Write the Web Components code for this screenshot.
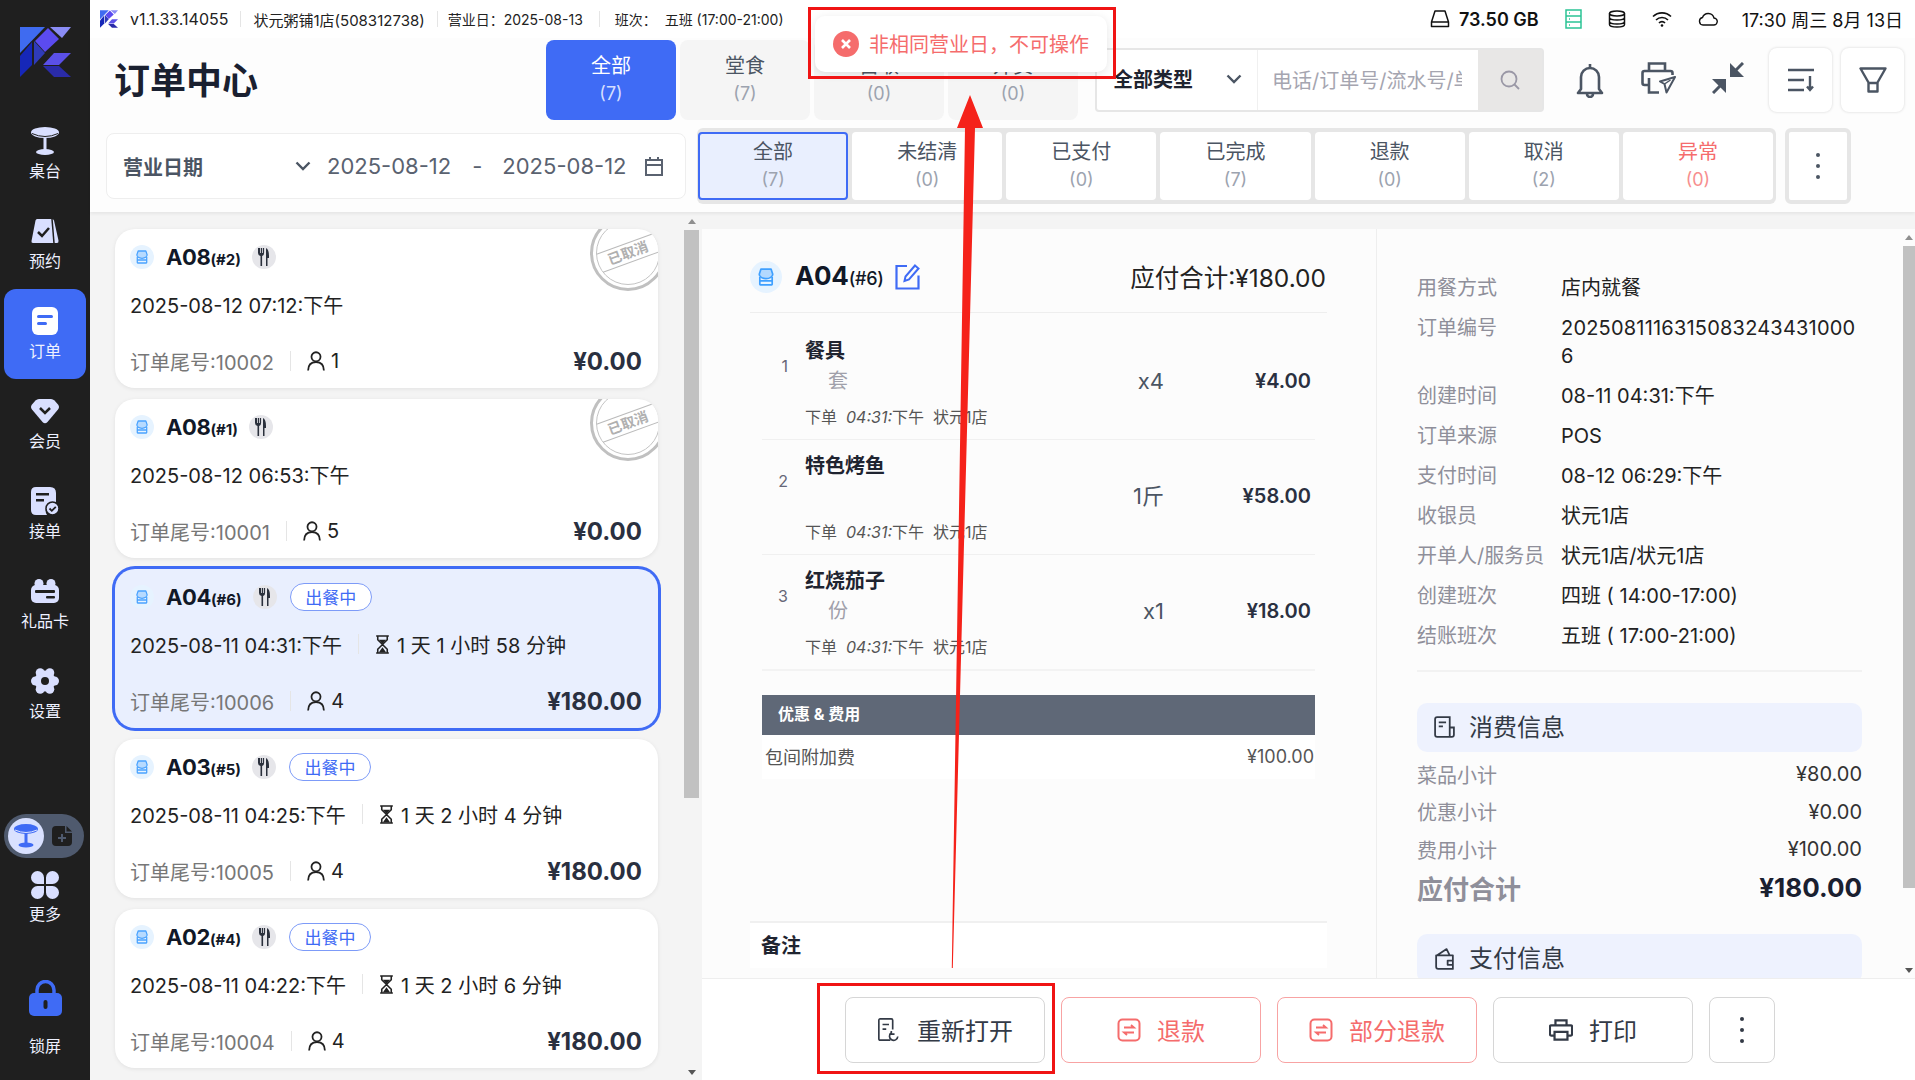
<!DOCTYPE html>
<html lang="zh">
<head>
<meta charset="utf-8">
<title>订单中心</title>
<style>
    html, body { margin: 0; height: 100%; }
    body { font-family: Inter, "Noto Sans CJK SC", sans-serif; color: #222; background: #f4f4f4; overflow: hidden; }
</style>
</head>
<body>
<pos-app></pos-app>
<script>
const LOGO = `
    <polygon fill="#3f6bf0" points="0,0 25,0 0,26"/>
    <polygon fill="#5b4bf0" points="28,1 39,12 25,25 15,14"/>
    <polygon fill="#8a8cf5" points="30,0 51,0 42,11"/>
    <polygon fill="#1627b8" points="0,29 12,15 12,38 0,50"/>
    <polygon fill="#2f3bb8" points="14,14 25,26 14,38"/>
    <polygon fill="#5b50e8" points="23,38 34,26 51,26 39,38"/>
    <polygon fill="#2a2ba8" points="23,39 39,39 51,50 34,50"/>`;

// Icons are keyed by name, each with its own viewBox
const ICONS = {
    logo: ['0 0 51 50', LOGO],
    table: ['0 0 28 28', `<ellipse cx="14" cy="5.5" rx="14" ry="5.5" fill="currentColor"/><path d="M1 6.5q13 6 26 0" stroke="#1f1f1f" fill="none"/><rect x="12.5" y="11" width="3" height="13" fill="currentColor"/><ellipse cx="14" cy="25" rx="9" ry="3" fill="currentColor"/>`],
    reserve: ['0 0 28 24', `<path d="M6 0h15q1.500 0 2 1.500l4.500 20q.3 2.500-1.500 2.500h-24q-2 0-1.500-2l4-20.500q.5-1.500 1.500-1.500z" fill="currentColor"/><path d="M21 0l2 24" stroke="#1f1f1f" stroke-width="1.500"/><path d="M7 13l4 4 7-8" stroke="#1f1f1f" stroke-width="2.500" fill="none"/>`],
    order: ['0 0 26 28', `<rect width="26" height="28" rx="6" fill="#fff"/><rect x="5" y="8" width="16" height="3" rx="1.500" fill="#3f6bf5"/><rect x="5" y="15" width="10" height="3" rx="1.500" fill="#3f6bf5"/>`],
    member: ['0 0 28 26', `<path d="M8 1h12q2 0 3.500 1.500l3.500 4q2 2.500 0 5l-10.500 12.500q-2.500 2.500-5 0l-10.500-12.500q-2-2.500 0-5l3.500-4q1.500-1.500 3.500-1.500z" fill="currentColor"/><path d="M9 10l5 5 5-5" stroke="#1f1f1f" stroke-width="2.500" fill="none"/>`],
    accept: ['0 0 28 28', `<path d="M5 0h14q6 0 6 6v10a8 8 0 0 0-9 12h-11q-5 0-5-5v-18q0-5 5-5z" fill="currentColor"/><rect x="5" y="6" width="13" height="2.500" fill="#1f1f1f"/><rect x="5" y="12" width="8" height="2.500" fill="#1f1f1f"/><circle cx="21.500" cy="21.500" r="6.500" fill="currentColor" stroke="#1f1f1f" stroke-width="1.500"/><path d="M18.500 21.500l2.300 2.300 4-4" stroke="#1f1f1f" stroke-width="1.800" fill="none"/>`],
    gift: ['0 0 28 24', `<circle cx="8" cy="4.500" r="4.500" fill="currentColor"/><circle cx="20" cy="4.500" r="4.500" fill="currentColor"/><rect y="6" width="28" height="18" rx="5" fill="currentColor"/><rect x="4" y="11" width="20" height="3" rx="1" fill="#1f1f1f"/><rect x="15" y="17" width="9" height="2.500" rx="1" fill="#1f1f1f"/>`],
    gear: ['0 0 28 28', `<g fill="currentColor"><circle cx="14" cy="14" r="10.500"/><circle cx="23.500" cy="14" r="4.500"/><circle cx="18.800" cy="5.700" r="4.500"/><circle cx="9.200" cy="5.700" r="4.500"/><circle cx="4.500" cy="14" r="4.500"/><circle cx="9.200" cy="22.300" r="4.500"/><circle cx="18.800" cy="22.300" r="4.500"/></g><circle cx="14" cy="14" r="4" fill="#1f1f1f"/>`],
    more: ['0 0 28 28', `<path d="M13 13h-6.500a6.500 6.500 0 1 1 6.500-6.500zM15 13h6.500a6.500 6.500 0 1 0-6.500-6.500zM13 15h-6.500a6.500 6.500 0 1 0 6.500 6.500zM15 15h6.500a6.500 6.500 0 1 1-6.500 6.500z" fill="currentColor"/>`],
    lock: ['0 0 33 36', `<path d="M8 16v-6a8.500 8.500 0 0 1 17 0v6" fill="none" stroke="#3f6bf5" stroke-width="3.500"/><rect y="13" width="33" height="23" rx="5" fill="#3f6bf5"/><rect x="14.500" y="20" width="4" height="9" rx="2" fill="#1f1f1f"/>`],
    blueTable: ['0 0 24 24', `<ellipse cx="12" cy="5" rx="12" ry="5" fill="#3f6bf5"/><path d="M1 6q11 5 22 0" stroke="#d9e1ff" fill="none"/><rect x="10.500" y="9" width="3" height="10" fill="#3f6bf5"/><ellipse cx="12" cy="21" rx="7.500" ry="2.500" fill="#3f6bf5"/>`],
    newDoc: ['0 0 20 20', `<path d="M4 0h9v7h7v9q0 4-4 4h-12q-4 0-4-4v-12q0-4 4-4z" fill="#1f1f1f"/><path d="M14.500 0l5.500 5.500h-5.500z" fill="#1f1f1f"/><path d="M6 12h8M10 8v8" stroke="#4f5a6e" stroke-width="2"/>`],
    disk: ['0 0 20 18', `<path d="M5 1h10l3.500 11v4.500h-17v-4.500zM1.500 12h17" fill="none" stroke="currentColor" stroke-width="1.500" stroke-linejoin="round"/>`],
    server: ['0 0 17 20', `<path d="M1 1h15v18h-15zM1 7h15M1 13h15" fill="none" stroke="#2bc495" stroke-width="1.500"/><path d="M4 4h1M4 10h1M4 16h1" stroke="#2bc495" stroke-width="1.500"/>`],
    db: ['0 0 18 18', `<ellipse cx="9" cy="3.500" rx="7.500" ry="2.500" fill="none" stroke="currentColor" stroke-width="1.500"/><path d="M1.500 3.500v11c0 1.400 3.400 2.500 7.500 2.500s7.500-1.100 7.500-2.500v-11M1.500 7.500c0 1.400 3.400 2.500 7.500 2.500s7.500-1.100 7.500-2.500M1.500 11.500c0 1.400 3.400 2.500 7.500 2.500s7.500-1.100 7.500-2.500" fill="none" stroke="currentColor" stroke-width="1.500"/>`],
    wifi: ['0 0 20 16', `<path d="M1 5.500a13 13 0 0 1 18 0M4 9a8.500 8.500 0 0 1 12 0M7 12a4 4 0 0 1 6 0" fill="none" stroke="currentColor" stroke-width="1.600"/><circle cx="10" cy="14.500" r="1.300" fill="currentColor"/>`],
    cloud: ['0 0 20 14', `<path d="M5 13h10.500a3.500 3.500 0 0 0 .5-7 6 6 0 0 0-11.500-.5 3.800 3.800 0 0 0 .5 7.500z" fill="none" stroke="currentColor" stroke-width="1.400"/>`],
    bell: ['0 0 28 36', `<path d="M2 31h24l-3-4v-12a9 9 0 0 0-18 0v12zM14 6v-4M11 32a3 3 0 0 0 6 0" fill="none" stroke="#4b5563" stroke-width="2.600" stroke-linejoin="round"/>`],
    printer: ['0 0 35 32', `<path d="M8 9v-7.500h16v7.500M7 23h-3.500q-2 0-2-2v-10q0-2 2-2h26q2 0 2 2v2M8 16v14.500h10" fill="none" stroke="#4b5563" stroke-width="2.600"/><path d="M34 15l-15 4.500 4.500 2.500 2 8.500z" fill="none" stroke="#4b5563" stroke-width="2" stroke-linejoin="round"/><path d="M23.500 22l6-4" stroke="#4b5563" stroke-width="1.500"/>`],
    compress: ['0 0 32 32', `<polygon points="18,1 18,15 32,15" fill="#4b5563"/><path d="M31 1l-7 7" stroke="#4b5563" stroke-width="3"/><polygon points="14,31 14,17 0,17" fill="#4b5563"/><path d="M1 31l7-7" stroke="#4b5563" stroke-width="3"/>`],
    sort: ['0 0 26 24', `<path d="M0 2h26M0 12h16M0 22h16M22 8v14M19 18.500l3 3.500 3-3.500" fill="none" stroke="#4b5563" stroke-width="2.400"/>`],
    funnel: ['0 0 28 26', `<path d="M1.500 1.500h25l-8 14v9h-9v-9zM9.500 16h9" fill="none" stroke="#4b5563" stroke-width="2.400" stroke-linejoin="round"/>`],
    chevron: ['0 0 16 10', `<path d="M1.500 1.500l6.500 6.500 6.500-6.500" fill="none" stroke="currentColor" stroke-width="2.400"/>`],
    calendar: ['0 0 18 20', `<path d="M1 4h16v15h-16zM1 9h16M5 1v4M13 1v4" fill="none" stroke="currentColor" stroke-width="2"/>`],
    search: ['0 0 20 20', `<circle cx="9" cy="9" r="7.500" fill="none" stroke="currentColor" stroke-width="1.800"/><path d="M14.500 14.500l4.500 4.500" stroke="currentColor" stroke-width="1.800"/>`],
    store: ['0 0 14 16', `<path d="M2.500 1h9l1.500 4.500a3 2 0 0 1-12 0z" fill="currentColor" fill-opacity=".3" stroke="currentColor" stroke-width="1.500" stroke-linejoin="round"/><path d="M1.500 8v6.500q0 .5.5.5h10q.5 0 .5-.5v-6.500M1.500 11.500h11" fill="none" stroke="currentColor" stroke-width="1.500"/>`],
    fork: ['0 0 12 18', `<path d="M0.500 0v5q0 2.500 2.500 3v10h1.600v-10q2-.5 2-3v-5h-1.200v5h-.8v-5h-1.100v5h-.8v-5zM8.500 18v-18q3 1.500 3 8v2h-1.500v8z" fill="currentColor"/>`],
    hourglass: ['0 0 14 18', `<path d="M1 1h12M1 17h12M2.500 1v3.500l4.500 4.500 4.500-4.500v-3.500M2.500 17v-3.500l4.500-4.500 4.500 4.500v3.500" fill="none" stroke="#222" stroke-width="1.500"/><path d="M3.500 4.500h7l-3.500 4zM3.500 16.500l3.500-5 3.500 5z" fill="#222"/>`],
    person: ['0 0 17 19', `<circle cx="8.500" cy="5.500" r="4.300" fill="none" stroke="currentColor" stroke-width="1.700"/><path d="M1 18.500q0-8 7.500-8t7.500 8" fill="none" stroke="currentColor" stroke-width="1.700"/>`],
    edit: ['0 0 25 26', `<path d="M12 2h-10.500v22.500h22v-13" fill="none" stroke="#3f6bf5" stroke-width="2.200"/><path d="M20 1.500l3.500 3-9.500 11-4.500 1.500 1-4.500z" fill="none" stroke="#3f6bf5" stroke-width="2"/>`],
    receipt: ['0 0 20 22', `<path d="M3 1h12v19h-12q-2 0-2-2v-15q0-2 2-2zM15 11h4v7q0 2-2 2h-2M4.500 6h7M4.500 10h4" fill="none" stroke="currentColor" stroke-width="1.700"/>`],
    wallet: ['0 0 20 22', `<path d="M2 8h16v13h-14q-2 0-2-2zM3 8l9-6 3 6M13 13h5v4h-5z" fill="none" stroke="currentColor" stroke-width="1.700" stroke-linejoin="round"/>`],
    reopen: ['0 0 25 26', `<path d="M14 24h-11q-1.500 0-1.500-1.500v-20q0-1.500 1.500-1.500h12q1.500 0 1.500 1.500v10M5.500 7h7M5.500 12h4" fill="none" stroke="currentColor" stroke-width="1.800"/><path d="M15 16a4.500 4.500 0 1 0 7 4M15 14v3.500h3.500" fill="none" stroke="currentColor" stroke-width="1.800"/>`],
    refund: ['0 0 24 24', `<rect x="1.500" y="1.500" width="21" height="21" rx="4" fill="none" stroke="currentColor" stroke-width="2"/><path d="M7 9.500h10l-3-2.500M17 14.500h-10l3 2.500" fill="none" stroke="currentColor" stroke-width="1.800"/>`],
    print: ['0 0 26 24', `<path d="M7 7v-5.500h12v5.500M6 18h-3.500q-1.500 0-1.500-1.500v-8q0-1.500 1.500-1.500h21q1.500 0 1.500 1.500v8q0 1.500-1.500 1.500h-3.500M6 14h14v8.500h-14z" fill="none" stroke="currentColor" stroke-width="2.400"/>`],
    close: ['0 0 26 26', `<circle cx="13" cy="13" r="13" fill="#f56c6c"/><path d="M9 9l8 8M17 9l-8 8" stroke="#fff" stroke-width="2.600"/>`],
};

function icon(name, w, h) {
    const [box, body] = ICONS[name];
    return `<svg viewBox="${box}" width="${w}" height="${h}" aria-hidden="true" style="display:block;flex:none">${body}</svg>`;
}

// Base class: every element renders its html into an open shadow root
class UiElement extends HTMLElement {
    connectedCallback() {
        if (this.shadowRoot) return;
        const template = document.createElement('template');
        template.innerHTML = this.render();
        this.attachShadow({ mode: 'open' });
        this.shadowRoot.appendChild(template.content.cloneNode(true));
    }

    attr(name, fallback = '') {
        return this.getAttribute(name) ?? fallback;
    }
}

class NavItem extends UiElement {
    render() {
        const [w, h] = this.attr('size', '28,28').split(',');
        return `
            <style>
                :host { display: flex; flex-direction: column; align-items: center; width: 82px; height: 90px; margin-left: 4px;
                    padding-top: 18px; box-sizing: border-box; border-radius: 12px; color: #d9dfff; }
                :host([active]) { background: #3f6bf5; }
                :host([bare]) { height: auto; padding-top: 0; }
                .box { height: 28px; display: flex; align-items: center; justify-content: center; }
                :host([tall]) .box { height: 36px; }
                .label { margin-top: 8px; font-size: 16px; line-height: 16px; color: #eef1ff; white-space: nowrap; }
                :host([bare]) .label { margin-top: 7px; }
                :host([tall]) .label { margin-top: 22px; }
            </style>
            <div class="box">${icon(this.attr('icon'), w, h)}</div>
            <div class="label"><slot></slot></div>
        `;
    }
}

class SideBar extends UiElement {
    render() {
        return `
            <style>
                :host { display: flex; flex-direction: column; width: 90px; height: 1080px; background: #1f1f1f; flex: none; }
                .logo { height: 109px; padding: 27px 0 0 20px; box-sizing: border-box; }
                .toggle { display: flex; align-items: center; width: 80px; height: 44px; margin: 75px 0 13px 4px; background: #4f5a6e;
                    border-radius: 22px; box-sizing: border-box; padding-left: 4px; }
                .knob { width: 36px; height: 36px; border-radius: 50%; background: #d9e1ff; display: flex; align-items: center; justify-content: center; }
                .doc { margin-left: 8px; }
                .lock { margin-top: 58px; }
            </style>
            <div class="logo">${icon('logo', 51, 50)}</div>
            <nav-item icon="table">桌台</nav-item>
            <nav-item icon="reserve" size="28,24">预约</nav-item>
            <nav-item icon="order" size="26,28" active>订单</nav-item>
            <nav-item icon="member" size="28,26">会员</nav-item>
            <nav-item icon="accept">接单</nav-item>
            <nav-item icon="gift" size="28,24">礼品卡</nav-item>
            <nav-item icon="gear">设置</nav-item>
            <div class="toggle">
                <div class="knob">${icon('blueTable', 24, 24)}</div>
                <div class="doc">${icon('newDoc', 20, 20)}</div>
            </div>
            <nav-item icon="more" bare>更多</nav-item>
            <div class="lock"><nav-item icon="lock" size="33,36" bare tall>锁屏</nav-item></div>
        `;
    }
}

class TopBar extends UiElement {
    render() {
        return `
            <style>
                :host { display: flex; align-items: center; height: 38px; background: #fff; font-size: 14px; color: #222; flex: none; white-space: nowrap; }
                .logo { margin: 0 12px 0 10px; }
                .sep { width: 1px; height: 16px; background: #e5e5e5; margin: 0 12px; }
                .ver { font-size: 16px; }
                .shop { font-size: 15px; }
                .right { margin-left: auto; display: flex; align-items: center; color: #111; }
                .gb { font-size: 18px; font-weight: 600; margin: 0 26px 0 9px; }
                .ico { margin-right: 26px; }
                .time { font-size: 18px; margin: 0 12px 0 -2px; }
            </style>
            <div class="logo">${icon('logo', 18, 18)}</div>
            <span class="ver">v1.1.33.14055</span><i class="sep"></i>
            <span class="shop">状元粥铺1店(508312738)</span><i class="sep" style="margin:0 10px 0 12px"></i>
            <span>营业日：2025-08-13</span><i class="sep" style="margin:0 15px 0 16px"></i>
            <span>班次：&nbsp;&nbsp;五班 (17:00-21:00)</span>
            <div class="right">
                ${icon('disk', 20, 18)}
                <span class="gb">73.50 GB</span>
                <span class="ico">${icon('server', 17, 20)}</span>
                <span class="ico">${icon('db', 18, 18)}</span>
                <span class="ico">${icon('wifi', 20, 16)}</span>
                <span class="ico">${icon('cloud', 20, 14)}</span>
                <span class="time">17:30 周三 8月 13日</span>
            </div>
        `;
    }
}

class TabButton extends UiElement {
    render() {
        return `
            <style>
                :host { display: flex; flex-direction: column; align-items: center; justify-content: center; box-sizing: border-box;
                    width: var(--tab-w, auto); height: var(--tab-h, auto); background: var(--tab-bg, #fff); border-radius: var(--tab-r, 4px);
                    color: #4b5563; font-size: 20px; line-height: 28px; }
                .n { font-size: 18px; color: #9ca3af; }
                :host([tone=solid]) { background: #3f6bf5; color: #fff; }
                :host([tone=solid]) .n { color: #d5deff; }
                :host([tone=soft]) { background: #e9effe; border: 2px solid #3f6bf5; }
                :host([tone=red]) { color: #f56c6c; }
                :host([tone=red]) .n { color: #f78f8f; }
            </style>
            <div><slot></slot></div>
            <div class="n">(${this.attr('count')})</div>
        `;
    }
}

class SearchBox extends UiElement {
    render() {
        return `
            <style>
                :host { display: flex; width: 449px; height: 64px; margin-left: 17px; box-sizing: border-box; background: #fff; border: 2px solid #e6e6e6; border-radius: 4px; flex: none; }
                .type { display: flex; align-items: center; width: 161px; padding: 0 0 3px 16px; box-sizing: border-box; font-size: 20px; font-weight: 700; color: #1f2430; border-right: 1px solid #f0f0f0; }
                .type svg { margin-left: 33px !important; color: #4b5563; }
                .input { flex: 1; display: flex; align-items: center; padding: 0 0 2px 14px; width: 0; font-size: 20px; color: #a5a5b0; overflow: hidden; white-space: nowrap; }
                .input span { display: block; width: 190px; overflow: hidden; }
                .go { width: 64px; background: #e8e7e6; display: flex; align-items: center; justify-content: center; color: #9a98a6; }
            </style>
            <div class="type">全部类型${icon('chevron', 16, 10)}</div>
            <div class="input"><span>电话/订单号/流水号/单据号</span></div>
            <div class="go">${icon('search', 20, 20)}</div>
        `;
    }
}

class OrderHeader extends UiElement {
    render() {
        return `
            <style>
                :host { display: block; background: #fdfdfd; height: 174px; box-shadow: 0 2px 3px rgba(0,0,0,.06); position: relative; flex: none; }
                .row1 { display: flex; align-items: center; height: 80px; padding-top: 2px; margin-bottom: 8px; }
                h1 { margin: 0 0 4px 24px; width: 432px; font-size: 36px; font-weight: 700; color: #1a2030; white-space: nowrap; }
                .tabs { display: flex; gap: 4px; --tab-w: 130px; --tab-h: 80px; --tab-bg: #f5f5f5; --tab-r: 8px; }
                .cell { width: 69px; display: flex; justify-content: center; flex: none; }
                .cells { display: flex; margin-left: 11px; }
                .card { width: 63px; height: 64px; box-sizing: border-box; background: #fff; border-radius: 8px; box-shadow: 0 0 3px rgba(0,0,0,.16);
                    display: flex; align-items: center; justify-content: center; flex: none; }
                .row2 { display: flex; align-items: center; }
                .date { display: flex; align-items: center; width: 580px; height: 66px; margin-left: 16px; box-sizing: border-box; background: #fff; border: 1px solid #eee; border-radius: 8px;
                    font-size: 22px; color: #5a6270; white-space: nowrap; }
                .date b { font-size: 20px; color: #4b5563; margin-left: 16px; width: 173px; }
                .date .chev { width: 32px; color: #4b5563; flex: none; margin-left: -1px; }
                .dash { margin: 0 20px 0 21px; }
                .date .cal { margin-left: 18px; color: #5a6270; }
                .status { display: grid; grid-template-columns: repeat(7, 1fr); gap: 4px; width: 1079px; height: 76px; margin-left: 11px; padding: 4px 3px 4px 1px; box-sizing: border-box; background: #e6e6e6; border-radius: 6px; }
                .more { display: flex; align-items: center; justify-content: center; width: 66px; height: 76px; margin-left: 9px; box-sizing: border-box; border: 4px solid #e6e6e6; border-radius: 6px; background: #fff; }
                .dots { display: flex; flex-direction: column; gap: 7px; }
                .dots i { width: 4px; height: 4px; background: #4b5563; border-radius: 50%; }
            </style>
            <div class="row1">
                <h1>订单中心</h1>
                <div class="tabs">
                    <tab-button tone="solid" count="7">全部</tab-button>
                    <tab-button count="7">堂食</tab-button>
                    <tab-button count="0">自取</tab-button>
                    <tab-button count="0">外卖</tab-button>
                </div>
                <search-box></search-box>
                <div class="cells">
                    <div class="cell">${icon('bell', 28, 36)}</div>
                    <div class="cell">${icon('printer', 35, 32)}</div>
                    <div class="cell">${icon('compress', 32, 32)}</div>
                </div>
                <div class="card" style="margin-left:7px">${icon('sort', 26, 24)}</div>
                <div class="card" style="margin-left:9px">${icon('funnel', 28, 26)}</div>
            </div>
            <div class="row2">
                <div class="date">
                    <b>营业日期</b>
                    <span class="chev">${icon('chevron', 16, 10)}</span>
                    <span>2025-08-12</span><span class="dash">-</span><span>2025-08-12</span>
                    <span class="cal">${icon('calendar', 18, 20)}</span>
                </div>
                <div class="status">
                    <tab-button tone="soft" count="7">全部</tab-button>
                    <tab-button count="0">未结清</tab-button>
                    <tab-button count="0">已支付</tab-button>
                    <tab-button count="7">已完成</tab-button>
                    <tab-button count="0">退款</tab-button>
                    <tab-button count="2">取消</tab-button>
                    <tab-button tone="red" count="0">异常</tab-button>
                </div>
                <div class="more"><div class="dots"><i></i><i></i><i></i></div></div>
            </div>
        `;
    }
}

class OrderCard extends UiElement {
    render() {
        const wait = this.attr('wait');
        const cooking = wait !== '';
        return `
            <style>
                :host { display: block; width: 543px; height: 159px; flex: none; border-radius: 20px; background: #fff; box-shadow: 0 1px 4px rgba(0,0,0,.08); }
                :host([selected]) { background: #e9effe; box-shadow: 0 0 0 3px #3f6bf5; }
                .in { position: relative; height: 100%; box-sizing: border-box; padding: 16px 16px 0 15px; overflow: hidden; border-radius: 20px; }
                .head { display: flex; align-items: center; height: 24px; }
                .store { width: 24px; height: 24px; border-radius: 50%; background: #e6f3ff; color: #4aa3ff; display: flex; align-items: center; justify-content: center; }
                .name { margin-left: 12px; font-size: 22px; font-weight: 700; color: #111827; white-space: nowrap; letter-spacing: -.4px; }
                .name small { font-size: 15px; font-weight: 700; letter-spacing: 0; }
                .fork { width: 24px; height: 24px; margin-left: 11px; border-radius: 50%; background: #e6e6ea; color: #2a303c; display: flex; align-items: center; justify-content: center; }
                .pill { margin: 0 0 1px 13px; width: 82px; height: 28px; box-sizing: border-box; border: 1.500px solid #7d9bf8; border-radius: 14px; color: #3f6bf5; font-size: 17px; display: flex; align-items: center; justify-content: center; background: #fff; }
                .time { display: flex; align-items: center; margin-top: 23px; height: 24px; font-size: 20px; color: #222; white-space: nowrap; }
                .time i, .foot i { width: 1px; height: 20px; background: #e5e5e5; margin: 0 16px; }
                .foot { display: flex; align-items: center; margin-top: 33px; height: 24px; font-size: 20px; color: #777; white-space: nowrap; }
                .foot .p { color: #222; display: flex; align-items: center; gap: 6px; }
                .foot .p svg { color: #222; }
                .total { margin-left: auto; font-size: 24px; font-weight: 700; color: #2a3040; }
                .stamp { position: absolute; left: 475px; top: -14px; width: 76px; height: 76px; box-sizing: border-box; border-radius: 50%; border: 3px solid #c0c0c0; }
                .stamp::before { content: ""; position: absolute; inset: 3px; border-radius: 50%; border: 1px solid #c4c4c4; }
                .stamp span { position: absolute; left: 5px; top: 25px; width: 60px; height: 18px; text-align: center; font-size: 14px; line-height: 18px; color: #b0b0b0; font-weight: 700; transform: rotate(-20deg); border-top: 1px solid #bbb; border-bottom: 1px solid #bbb; white-space: nowrap; }
            </style>
            <div class="in">
                <div class="head">
                    <div class="store">${icon('store', 12, 14)}</div>
                    <div class="name">${this.attr('name')}<small>(${this.attr('seq')})</small></div>
                    <div class="fork">${icon('fork', 13, 18)}</div>
                    ${cooking ? '<div class="pill">出餐中</div>' : ''}
                </div>
                <div class="time"><span>${this.attr('time')}</span>${cooking ? `<i></i>${icon('hourglass', 15, 19)}<span style="margin-left:7px">${wait}</span>` : ''}</div>
                <div class="foot">
                    <span>订单尾号:${this.attr('tail')}</span><i></i>
                    <span class="p">${icon('person', 18, 20)}${this.attr('people')}</span>
                    <span class="total">${this.attr('total')}</span>
                </div>
                ${cooking ? '' : '<div class="stamp"><span>已取消</span></div>'}
            </div>
        `;
    }
}

class ScrollRail extends UiElement {
    render() {
        return `
            <style>
                :host { display: flex; flex-direction: column; align-items: center; flex: none; width: var(--rail-w, 15px); height: 100%; background: var(--rail-bg, transparent); }
                .up { height: var(--rail-top, 18px); display: flex; align-items: center; justify-content: center; flex: none; }
                .up::before { content: ""; border: 4px solid transparent; border-top: 0; border-bottom: 5px solid #8f8f8f; }
                .thumb { width: 100%; height: var(--thumb, 568px); background: #c1c1c1; flex: none; }
                .down { margin-top: auto; height: 16px; display: flex; align-items: center; justify-content: center; }
                .down::before { content: ""; border: 4px solid transparent; border-bottom: 0; border-top: 5px solid #555; }
            </style>
            <div class="up"></div>
            <div class="thumb"></div>
            <div class="down"></div>
        `;
    }
}

class OrderList extends UiElement {
    render() {
        return `
            <style>
                :host { display: flex; width: 612px; height: 868px; flex: none; background: #f4f4f4; overflow: hidden; }
                .cards { display: flex; flex-direction: column; gap: 11px; padding: 17px 0 0 25px; width: 568px; box-sizing: border-box; flex: none; }
                scroll-rail { margin-left: 26px; }
            </style>
            <div class="cards"><slot></slot></div>
            <scroll-rail></scroll-rail>
        `;
    }
}

class OrderLine extends UiElement {
    render() {
        const unit = this.attr('unit');
        return `
            <style>
                :host { display: grid; grid-template-columns: 43px 1fr 100px 151px; grid-template-rows: 26px 26px 26px; row-gap: 4px;
                    height: 115px; box-sizing: border-box; padding: 13px 0 0; border-bottom: 1px solid #f0f0f0; }
                :host([last]) { border-bottom: 2px solid #f3f3f3; height: 116px; }
                .idx { grid-row: 1 / 3; align-self: center; text-align: right; padding-right: 17px; font-size: 16px; color: #667; }
                .name { font-size: 20px; line-height: 26px; font-weight: 700; color: #1f2430; }
                .unit { grid-column: 2; grid-row: 2; padding-left: 23px; font-size: 20px; line-height: 26px; color: #a0a0aa; }
                .qty { grid-column: 3; grid-row: 2; text-align: right; font-size: 22px; line-height: 26px; color: #4b5563; }
                .price { grid-column: 4; grid-row: 2; text-align: right; padding-right: 4px; font-size: 20px; line-height: 26px; font-weight: 600; color: #2a3040; }
                .meta { grid-column: 2 / 5; grid-row: 3; margin-top: 6px; font-size: 16px; line-height: 26px; color: #555; white-space: pre; }
                em { font-style: italic; }
            </style>
            <div class="idx">${this.attr('idx')}</div>
            <div class="name">${this.attr('name')}</div>
            ${unit ? `<div class="unit">${unit}</div>` : ''}
            <div class="qty">${this.attr('qty')}</div>
            <div class="price">${this.attr('price')}</div>
            <div class="meta">下单  <em>04:31:</em>下午  状元1店</div>
        `;
    }
}

class OrderDetail extends UiElement {
    render() {
        return `
            <style>
                :host { display: flex; flex-direction: column; width: 675px; height: 749px; box-sizing: border-box; padding: 32px 49px 10px 48px; background: #fcfcfc; border-right: 1px solid #eee; flex: none; }
                .head { display: flex; align-items: center; height: 32px; padding-bottom: 19px; border-bottom: 1px solid #eee; flex: none; }
                .store { width: 32px; height: 32px; border-radius: 50%; background: #e6f3ff; color: #3fa0ff; display: flex; align-items: center; justify-content: center; }
                .name { margin: 0 0 4px 13px; font-size: 26px; font-weight: 700; color: #111827; letter-spacing: -.3px; white-space: nowrap; }
                .name small { font-size: 18px; font-weight: 500; }
                .edit { margin: 0 0 1px 11px; }
                .sum { margin: 0 1px 2px auto; font-size: 24.500px; color: #222; white-space: nowrap; }
                .lines { margin: 0 12px; padding-top: 12px; }
                .fee { margin: 24px 12px 0; background: #fff; }
                .fee-title { height: 38px; line-height: 38px; padding: 0 0 2px 16px; background: #5f6877; color: #fff; font-size: 16px; font-weight: 700; }
                .fee-row { display: flex; justify-content: space-between; height: 42px; padding: 0 1px 2px 3px; align-items: center; font-size: 18px; color: #555; }
                .note { margin-top: auto; height: 47px; display: flex; align-items: center; padding: 0 0 2px 11px; background: #fff; border-top: 2px solid #f0f0f0; box-sizing: border-box; font-size: 20px; font-weight: 700; color: #1f2430; }
            </style>
            <div class="head">
                <div class="store">${icon('store', 16, 18)}</div>
                <div class="name">A04<small>(#6)</small></div>
                <div class="edit">${icon('edit', 25, 26)}</div>
                <div class="sum">应付合计:¥180.00</div>
            </div>
            <div class="lines"><slot></slot></div>
            <div class="fee">
                <div class="fee-title">优惠 &amp; 费用</div>
                <div class="fee-row"><span>包间附加费</span><span>¥100.00</span></div>
            </div>
            <div class="note">备注</div>
        `;
    }
}

class InfoRow extends UiElement {
    render() {
        return `
            <style>
                :host { display: grid; grid-template-columns: 144px 301px; font-size: 20px; line-height: 28px; margin-bottom: 12px; }
                .k { color: #8f8f9a; white-space: nowrap; }
                .v { color: #222; word-break: break-all; }
            </style>
            <div class="k">${this.attr('k')}</div>
            <div class="v"><slot></slot></div>
        `;
    }
}

class SumRow extends UiElement {
    render() {
        return `
            <style>
                :host { display: flex; justify-content: space-between; align-items: center; height: 28px; margin-top: 9.500px; font-size: 20px; color: #8f8f9a; }
                .v { color: #333; }
                :host([big]) { height: 36px; margin-top: 6px; font-size: 26px; font-weight: 700; }
                :host([big]) .v { color: #1a2030; }
            </style>
            <span>${this.attr('k')}</span>
            <span class="v">${this.attr('v')}</span>
        `;
    }
}

class SectionHead extends UiElement {
    render() {
        return `
            <style>
                :host { display: flex; align-items: center; gap: 14px; height: 49px; padding-left: 17px; background: #eef2fe; border-radius: 10px; font-size: 24px; color: #333a46; flex: none; }
                span { padding-bottom: 4px; }
            </style>
            ${icon(this.attr('icon'), 21, 23)}
            <span><slot></slot></span>
        `;
    }
}

class OrderInfo extends UiElement {
    render() {
        return `
            <style>
                :host { display: flex; flex: 1; height: 749px; background: #fcfcfc; overflow: hidden; }
                .body { width: 526px; box-sizing: border-box; padding: 44.500px 41px 0 40px; flex: none; }
                hr { border: 0; border-top: 2px solid #f2f2f2; margin: 20.500px 0 31px; }
                section-head + sum-row { margin-top: 8px; }
                .pay { margin-top: 29px; }
                .serial { letter-spacing: .2px; }
                scroll-rail { --rail-w: 12px; --rail-top: 17px; --thumb: 642px; margin-top: 0; }
            </style>
            <div class="body">
                <info-row k="用餐方式">店内就餐</info-row>
                <info-row k="订单编号"><span class="serial">20250811163150832434310006</span></info-row>
                <info-row k="创建时间">08-11 04:31:下午</info-row>
                <info-row k="订单来源">POS</info-row>
                <info-row k="支付时间">08-12 06:29:下午</info-row>
                <info-row k="收银员">状元1店</info-row>
                <info-row k="开单人/服务员">状元1店/状元1店</info-row>
                <info-row k="创建班次">四班 ( 14:00-17:00)</info-row>
                <info-row k="结账班次" style="margin-bottom:0">五班 ( 17:00-21:00)</info-row>
                <hr>
                <section-head icon="receipt">消费信息</section-head>
                <sum-row k="菜品小计" v="¥80.00"></sum-row>
                <sum-row k="优惠小计" v="¥0.00"></sum-row>
                <sum-row k="费用小计" v="¥100.00"></sum-row>
                <sum-row k="应付合计" v="¥180.00" big></sum-row>
                <section-head class="pay" icon="wallet">支付信息</section-head>
            </div>
            <scroll-rail></scroll-rail>
        `;
    }
}

class ActionButton extends UiElement {
    render() {
        const ic = this.attr('icon');
        return `
            <style>
                :host { display: flex; align-items: center; justify-content: center; gap: 16px; width: 200px; height: 66px; box-sizing: border-box; padding-bottom: 1px; border: 1.500px solid #d6d6d6; border-radius: 8px; background: #fff; font-size: 24px; color: #333a46; flex: none; }
                :host([tone=danger]) { border-color: #f8a3a3; color: #f56c6c; }
                :host([narrow]) { width: 66px; }
                .dots { display: flex; flex-direction: column; gap: 7px; }
                .dots i { width: 4px; height: 4px; background: #333a46; border-radius: 50%; }
            </style>
            ${ic ? icon(ic, 24, 24) : '<div class="dots"><i></i><i></i><i></i></div>'}
            <slot></slot>
        `;
    }
}

class ActionBar extends UiElement {
    render() {
        return `
            <style>
                :host { display: flex; gap: 16px; height: 102px; box-sizing: border-box; padding: 18px 0 0 143px; background: #fff; border-top: 1px solid #eee; flex: none; }
            </style>
            <action-button icon="reopen">重新打开</action-button>
            <action-button icon="refund" tone="danger">退款</action-button>
            <action-button icon="refund" tone="danger">部分退款</action-button>
            <action-button icon="print">打印</action-button>
            <action-button narrow></action-button>
        `;
    }
}

// Toast plus the red review marks drawn over the screenshot
class ReviewLayer extends UiElement {
    render() {
        return `
            <style>
                :host { position: absolute; inset: 0; pointer-events: none; display: block; }
                .toast { position: absolute; left: 815px; top: 16px; width: 292px; height: 56px; box-sizing: border-box; padding-left: 18px; background: #fff; border-radius: 10px; box-shadow: 0 2px 10px rgba(0,0,0,.1);
                    display: flex; align-items: center; gap: 10px; font-size: 20px; color: #f56c6c; white-space: nowrap; }
                .toast span { padding-bottom: 2px; }
                .box { position: absolute; box-sizing: border-box; border: 3px solid #f01414; }
                svg.arrow { position: absolute; left: 0; top: 0; }
            </style>
            <svg class="arrow" width="1915" height="1080" aria-hidden="true">
                <polygon fill="#f5221a" points="970,95 983,128 975,128 952.800,968 951.800,968 965,128 957,128"/>
            </svg>
            <div class="toast">${icon('close', 26, 26)}<span>非相同营业日，不可操作</span></div>
            <div class="box" style="left:808px;top:7px;width:308px;height:72px"></div>
            <div class="box" style="left:817px;top:983px;width:238px;height:91px"></div>
        `;
    }
}

class PosApp extends UiElement {
    render() {
        return `
            <style>
                :host { display: flex; position: relative; width: 1915px; height: 1080px; overflow: hidden; background: #f4f4f4; }
                .main { display: flex; flex-direction: column; flex: 1; min-width: 0; }
                .work { display: flex; flex: 1; min-height: 0; }
                .side { display: flex; flex-direction: column; flex: 1; min-width: 0; }
                .split { display: flex; margin-top: 17px; height: 749px; }
            </style>
            <side-bar></side-bar>
            <div class="main">
                <top-bar></top-bar>
                <order-header></order-header>
                <div class="work">
                    <order-list>
                        <order-card name="A08" seq="#2" time="2025-08-12 07:12:下午" tail="10002" people="1" total="¥0.00"></order-card>
                        <order-card name="A08" seq="#1" time="2025-08-12 06:53:下午" tail="10001" people="5" total="¥0.00"></order-card>
                        <order-card selected name="A04" seq="#6" time="2025-08-11 04:31:下午" wait="1 天 1 小时 58 分钟" tail="10006" people="4" total="¥180.00"></order-card>
                        <order-card name="A03" seq="#5" time="2025-08-11 04:25:下午" wait="1 天 2 小时 4 分钟" tail="10005" people="4" total="¥180.00"></order-card>
                        <order-card name="A02" seq="#4" time="2025-08-11 04:22:下午" wait="1 天 2 小时 6 分钟" tail="10004" people="4" total="¥180.00"></order-card>
                    </order-list>
                    <div class="side">
                        <div class="split">
                            <order-detail>
                                <order-line idx="1" name="餐具" unit="套" qty="x4" price="¥4.00"></order-line>
                                <order-line idx="2" name="特色烤鱼" qty="1斤" price="¥58.00"></order-line>
                                <order-line last idx="3" name="红烧茄子" unit="份" qty="x1" price="¥18.00"></order-line>
                            </order-detail>
                            <order-info></order-info>
                        </div>
                        <action-bar></action-bar>
                    </div>
                </div>
            </div>
            <review-layer></review-layer>
        `;
    }
}

// Register children first so they upgrade as soon as a parent stamps them
const ELEMENTS = {
    'nav-item': NavItem, 'side-bar': SideBar, 'top-bar': TopBar, 'tab-button': TabButton, 'search-box': SearchBox,
    'order-header': OrderHeader, 'order-card': OrderCard, 'scroll-rail': ScrollRail, 'order-list': OrderList,
    'order-line': OrderLine, 'order-detail': OrderDetail, 'info-row': InfoRow, 'sum-row': SumRow,
    'section-head': SectionHead, 'order-info': OrderInfo, 'action-button': ActionButton, 'action-bar': ActionBar,
    'review-layer': ReviewLayer, 'pos-app': PosApp,
};
Object.entries(ELEMENTS).forEach(([tag, cls]) => {
    if (!window.customElements.get(tag)) window.customElements.define(tag, cls);
});
</script>
</body>
</html>
